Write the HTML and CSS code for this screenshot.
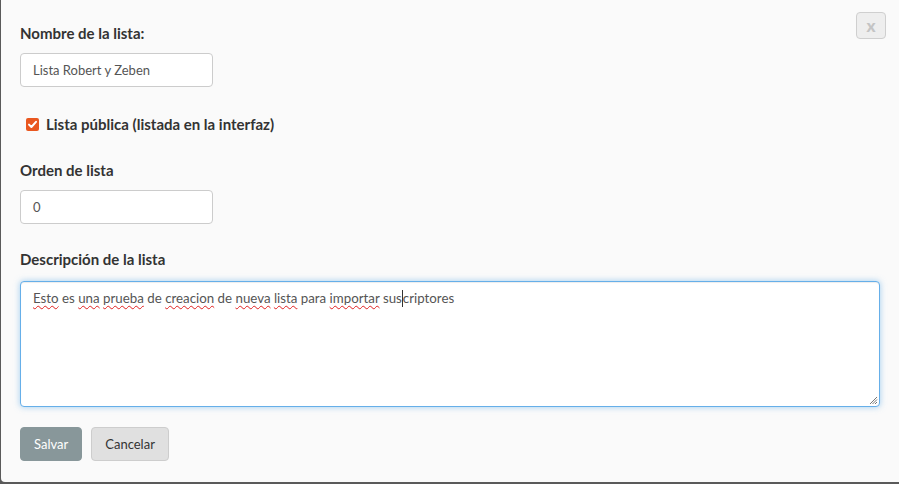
FILE: index.html
```html
<!DOCTYPE html>
<html lang="es">
<head>
<meta charset="utf-8">
<link rel="stylesheet" href="styles.css">
</head>
<body>
<div class="modal">
  <button class="close">x</button>
  <div class="group">
    <label class="lbl">Nombre de la lista:</label>
    <div class="input short">Lista Robert y Zeben</div>
  </div>
  <div class="check-row">
    <span class="checkbox">
      <svg width="13" height="13" viewBox="0 0 13 13"><rect width="13" height="13" rx="2" fill="#e9571f"/><path d="M3 6.6 L5.4 9 L10 3.8" fill="none" stroke="#fff" stroke-width="2" stroke-linecap="round" stroke-linejoin="round"/></svg>
    </span>
    <span class="lbl">Lista pública (listada en la interfaz)</span>
  </div>
  <div class="group g2">
    <label class="lbl">Orden de lista</label>
    <div class="input short">0</div>
  </div>
  <div class="group g3">
    <label class="lbl">Descripción de la lista</label>
    <div class="textarea"><span class="sp">Esto</span> es <span class="sp">una</span> <span class="sp">prueba</span> de <span class="sp">creacion</span> de <span class="sp">nueva</span> <span class="sp">lista</span> para <span class="sp">importar</span> sus<span class="caret"></span>criptores<svg class="grip" width="10" height="10" viewBox="0 0 10 10"><path d="M9 2 L2 9 M9 4.5 L4.5 9 M9 7 L7 9" stroke="#777" stroke-width="1"/></svg></div>
  </div>
  <div class="buttons">
    <button class="btn save">Salvar</button>
    <button class="btn cancel">Cancelar</button>
  </div>
</div>
</body>
</html>
```
FILE: styles.css
```css
* { box-sizing: border-box; }
html, body { margin: 0; padding: 0; }
body {
  background: #5a5a5a;
  width: 899px;
  height: 484px;
  overflow: hidden;
  font-family: "Lato", "Noto Sans", sans-serif;
}
.modal {
  position: relative;
  margin-left: 1px;
  height: 482px;
  background: #fafafa;
  border-radius: 0 0 0 4px;
  padding: 23px 19px 0 19px;
}
.close {
  position: absolute;
  top: 12px;
  right: 13px;
  width: 30px;
  height: 27px;
  background: #eeeeee;
  border: 1px solid #cfcfcf;
  border-radius: 4px;
  color: #c4c4c4;
  font-family: inherit;
  font-weight: 900;
  font-size: 17px;
  line-height: 22px;
  padding: 0;
}
.lbl {
  display: block;
  font-weight: 700;
  font-size: 15px;
  line-height: 20px;
  color: #333;
}
.group .lbl { margin-bottom: 10px; }
.input {
  width: 193px;
  height: 34px;
  border: 1px solid #ccc;
  border-radius: 4px;
  background: #fff;
  padding: 0 12px;
  font-size: 13px;
  line-height: 32px;
  color: #555;
}
.check-row {
  display: flex;
  align-items: center;
  gap: 7px;
  margin-top: 27px;
  padding-left: 6px;
}
.checkbox { display: flex; width: 13px; height: 13px; }
.g2 { margin-top: 26px; }
.g3 { margin-top: 25px; }
.g3 .lbl { margin-bottom: 12px; }
.textarea {
  position: relative;
  width: 860px;
  height: 126px;
  border: 1px solid #66afe9;
  border-radius: 4px;
  background: #fff;
  box-shadow: inset 0 1px 1px rgba(0,0,0,.075), 0 0 6px rgba(102,175,233,.6);
  padding: 6px 12px;
  font-size: 13.3px;
  line-height: 20px;
  color: #555;
}
.sp { text-decoration: underline wavy #e02020; text-decoration-thickness: 1px; text-underline-offset: 2px; }
.caret { display: inline-block; width: 1px; height: 17px; background: #333; vertical-align: -4px; }
.grip { position: absolute; right: 1px; bottom: 1px; }
.buttons {
  display: flex;
  gap: 9px;
  margin-top: 20px;
}
.btn {
  height: 34px;
  border-radius: 4px;
  font-family: inherit;
  font-size: 13px;
  padding: 0 13px;
}
.save {
  background: #88979a;
  border: 1px solid #88979a;
  color: #fff;
}
.cancel {
  background: #e0e0e0;
  border: 1px solid #cdcdcd;
  color: #333;
}
```
